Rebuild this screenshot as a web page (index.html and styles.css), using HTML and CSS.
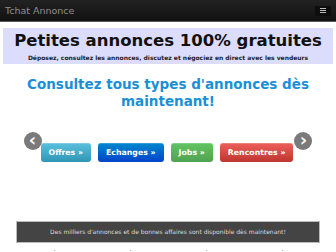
FILE: index.html
```html
<!DOCTYPE html>
<html lang="fr">
<head>
  <meta charset="UTF-8">
  <title>Tchat Annonce</title>
  <link rel="stylesheet" href="styles.css">
</head>
<body>
  <div class="navbar">
    <a class="brand" href="#">Tchat Annonce</a>
    <button class="btn-navbar"><span></span><span></span><span></span></button>
  </div>

  <div class="container">
    <div class="hero">
      <h1>Petites annonces 100% gratuites</h1>
      <p>Déposez, consultez les annonces, discutez et négociez en direct avec les vendeurs</p>
    </div>

    <h2 class="lead">Consultez tous types d'annonces dès maintenant!</h2>

    <div class="carousel">
      <a class="carousel-control left" href="#">&lsaquo;</a>
      <div class="btn-row">
        <a class="btn btn-info" href="#">Offres &raquo;</a>
        <a class="btn btn-primary" href="#">Echanges &raquo;</a>
        <a class="btn btn-success" href="#">Jobs &raquo;</a>
        <a class="btn btn-danger" href="#">Rencontres &raquo;</a>
      </div>
      <a class="carousel-control right" href="#">&rsaquo;</a>
    </div>

    <div class="well">Des milliers d'annonces et de bonnes affaires sont disponible dès maintenant!</div>

    <div class="thumbs">
      <span></span><span></span><span></span><span></span>
    </div>
  </div>
</body>
</html>
```

FILE: styles.css
```css
body {
  margin: 0;
  font-family: "DejaVu Sans", Verdana, sans-serif;
  background-color: #ffffff;
  color: #333333;
}

.navbar {
  display: flex;
  justify-content: space-between;
  align-items: center;
  height: 21px;
  padding: 0 5px;
  background: linear-gradient(#222222, #111111);
  border-bottom: 1px solid #5a5a5a;
}

.brand {
  font-size: 9.5px;
  color: #8f8f8f;
  text-decoration: none;
}

.btn-navbar {
  display: flex;
  flex-direction: column;
  justify-content: center;
  gap: 1px;
  width: 16px;
  height: 10px;
  padding: 0 5px;
  margin: 0;
  border: none;
  border-radius: 1px;
  background-color: #0d0d0d;
}

.btn-navbar span {
  display: block;
  height: 1px;
  background-color: #bbbbbb;
}

.container {
  margin: 0 3px;
}

.hero {
  margin-top: 6px;
  padding: 3px 0 2px;
  background-color: #dcdcfc;
  text-align: center;
}

.hero h1 {
  margin: 0;
  font-size: 16.5px;
  font-weight: bold;
  color: #111111;
  line-height: 20px;
  white-space: nowrap;
}

.hero p {
  margin: 2px 0 0;
  font-size: 6px;
  font-weight: bold;
  color: #222222;
  line-height: 9px;
}

.lead {
  margin: 12px 0 0;
  font-size: 13.5px;
  line-height: 17px;
  color: #1b8fd6;
  text-align: center;
}

.carousel {
  display: flex;
  align-items: flex-start;
  justify-content: center;
  margin-top: 22px;
}

.carousel-control {
  flex-shrink: 0;
  position: relative;
  z-index: 1;
  width: 18px;
  height: 18px;
  border-radius: 50%;
  background-color: #7a7a7a;
  color: #ffffff;
  font-size: 18px;
  line-height: 15px;
  text-align: center;
  text-decoration: none;
  font-weight: bold;
}

.carousel-control.left {
  margin-right: -1px;
}

.carousel-control.right {
  margin-left: 1px;
}

.btn-row {
  display: flex;
  gap: 7px;
  margin-top: 11px;
}

.btn {
  display: block;
  white-space: nowrap;
  padding: 0 8px;
  height: 19px;
  line-height: 19px;
  border-radius: 3px;
  font-size: 7.8px;
  font-weight: bold;
  color: #ffffff;
  text-decoration: none;
  box-shadow: inset 0 1px 0 rgba(255, 255, 255, 0.2);
}

.btn-info {
  background: linear-gradient(#5bc0de, #2f96b4);
}

.btn-primary {
  background: linear-gradient(#0088cc, #0044cc);
}

.btn-success {
  background: linear-gradient(#62c462, #51a351);
}

.btn-danger {
  background: linear-gradient(#ee5f5b, #bd362f);
}

.well {
  margin: 59px 13px 0;
  height: 20px;
  line-height: 20px;
  background-color: #444444;
  border: 1px solid #bbbbbb;
  color: #dddddd;
  font-size: 6px;
  text-align: center;
}

.thumbs {
  display: flex;
  justify-content: space-around;
  margin: 7px 13px 0;
}

.thumbs span {
  width: 1px;
  height: 1px;
  background-color: #aaaaaa;
}
```
